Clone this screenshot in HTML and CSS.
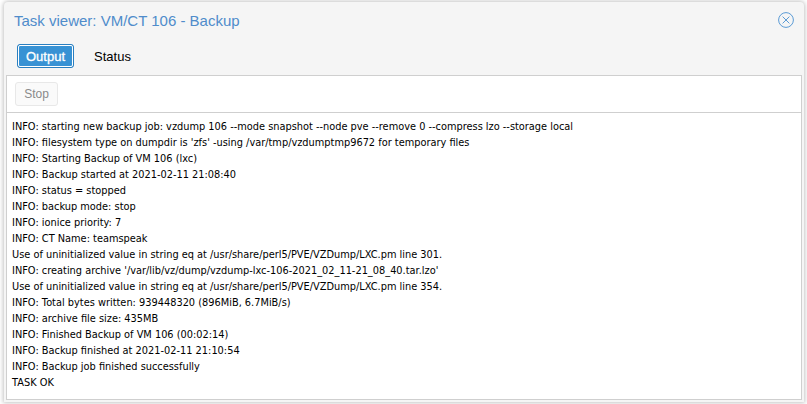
FILE: index.html
```html
<!DOCTYPE html>
<html lang="en">
<head>
<meta charset="utf-8">
<title>Task viewer</title>
<link rel="stylesheet" href="styles.css">
</head>
<body>
<div class="window">
  <header class="head">
    <h1 class="title">Task viewer: VM/CT 106 - Backup</h1>
    <svg class="close" width="16" height="16" viewBox="0 0 16 16"><circle cx="8" cy="8" r="7.4"/><path d="M4.6 4.6l6.8 6.8M11.4 4.6l-6.8 6.8"/></svg>
  </header>
  <nav class="tabs">
    <span class="tab active">Output</span>
    <span class="tab">Status</span>
  </nav>
  <section class="panel">
    <div class="toolbar"><button class="stop" type="button">Stop</button></div>
    <div class="log">
      <div>INFO: starting new backup job: vzdump 106 --mode snapshot --node pve --remove 0 --compress lzo --storage local</div>
      <div>INFO: filesystem type on dumpdir is 'zfs' -using /var/tmp/vzdumptmp9672 for temporary files</div>
      <div>INFO: Starting Backup of VM 106 (lxc)</div>
      <div>INFO: Backup started at 2021-02-11 21:08:40</div>
      <div>INFO: status = stopped</div>
      <div>INFO: backup mode: stop</div>
      <div>INFO: ionice priority: 7</div>
      <div>INFO: CT Name: teamspeak</div>
      <div>Use of uninitialized value in string eq at /usr/share/perl5/PVE/VZDump/LXC.pm line 301.</div>
      <div>INFO: creating archive '/var/lib/vz/dump/vzdump-lxc-106-2021_02_11-21_08_40.tar.lzo'</div>
      <div>Use of uninitialized value in string eq at /usr/share/perl5/PVE/VZDump/LXC.pm line 354.</div>
      <div>INFO: Total bytes written: 939448320 (896MiB, 6.7MiB/s)</div>
      <div>INFO: archive file size: 435MB</div>
      <div>INFO: Finished Backup of VM 106 (00:02:14)</div>
      <div>INFO: Backup finished at 2021-02-11 21:10:54</div>
      <div>INFO: Backup job finished successfully</div>
      <div>TASK OK</div>
    </div>
  </section>
</div>
</body>
</html>
```
FILE: styles.css
```css
* { box-sizing: border-box; }
html, body { height: 100%; }
body {
  margin: 0;
  padding: 2px 3px 2px 4px;
  background: #fff;
  overflow: hidden;
  font-family: "Liberation Sans", Arial, sans-serif;
}
.window {
  height: 400px;
  display: flex;
  flex-direction: column;
  background: #f5f5f5;
  border-radius: 4px 4px 0 0;
  box-shadow: 0 0 4px 1px #c4c4c4;
  padding: 0 2px 2px;
}
.head {
  height: 36px;
  padding: 0 8px 0 8px;
  display: flex;
  align-items: center;
  justify-content: space-between;
}
.title {
  margin: 0;
  font-size: 15px;
  font-weight: 400;
  color: #4f8ccb;
}
.close { fill: none; stroke: #5b9bd5; stroke-width: 1; }
.tabs {
  height: 37px;
  padding: 6px 0 0 11px;
  display: flex;
  gap: 3px;
  align-items: flex-start;
}
.tab {
  height: 24px;
  padding: 0 8px;
  display: flex;
  align-items: center;
  font-size: 13px;
  color: #000;
}
.tab.active {
  background: #3892d4;
  color: #fff;
  font-weight: 400;
  -webkit-text-stroke: 0.3px #fff;
  border: 1px solid #2a7fc0;
  border-radius: 3px;
  outline: 1px solid #fff;
  outline-offset: -2px;
  margin-right: 9px;
}
.panel {
  flex: 1;
  min-height: 0;
  background: #fff;
  border: 1px solid #cfcfcf;
}
.toolbar {
  height: 37px;
  padding: 6px 8px;
  border-bottom: 1px solid #cfcfcf;
}
.stop {
  width: 43px;
  height: 24px;
  padding: 0;
  background: #fafafa;
  border: 1px solid #e8e8e8;
  border-radius: 3px;
  font: 12px "Liberation Sans", Arial, sans-serif;
  color: #8a8a8a;
}
.log {
  padding: 6px 5px 4px;
  font-family: "DejaVu Sans", Verdana, sans-serif;
  font-size: 9.8px;
  line-height: 16px;
  color: #000;
  white-space: nowrap;
}
```
